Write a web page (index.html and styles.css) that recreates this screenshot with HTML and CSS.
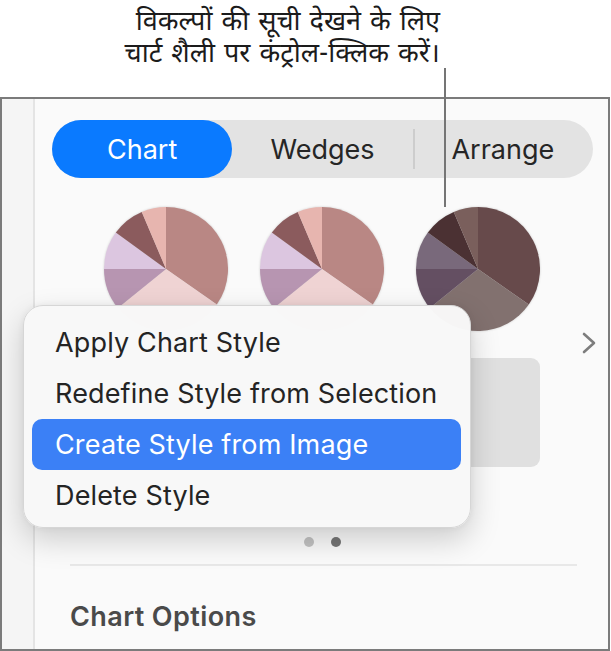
FILE: index.html
```html
<!DOCTYPE html>
<html lang="hi">
<head>
<meta charset="utf-8">
<title>Chart style menu</title>
<link rel="stylesheet" href="styles.css">
</head>
<body>
<div class="page">
  <div class="callout">
    <p class="callout-text"><span class="callout-line">विकल्पों की सूची देखने के लिए</span><span class="callout-line">चार्ट शैली पर कंट्रोल-क्लिक करें।</span></p>
  </div>
  <div class="panel">
    <div class="sidebar"></div>
    <div class="content">
      <div class="segmented">
        <div class="seg seg-active">Chart</div>
        <div class="seg">Wedges</div>
        <div class="seg seg-divided">Arrange</div>
      </div>
      <div class="styles">
        <div class="style-grid">
          <svg class="pie" viewBox="-62 -62 124 124">
            <path fill="#b98784" d="M0 0L0 -62A62 62 0 0 1 50.79 35.56Z"/>
            <path fill="#efd3d3" d="M0 0L50.79 35.56A62 62 0 0 1 -48.18 39.02Z"/>
            <path fill="#b795b1" d="M0 0L-48.18 39.02A62 62 0 0 1 -62 0Z"/>
            <path fill="#dcc6e0" d="M0 0L-62 0A62 62 0 0 1 -50.16 -36.44Z"/>
            <path fill="#8b5b5d" d="M0 0L-50.16 -36.44A62 62 0 0 1 -24.22 -57.07Z"/>
            <path fill="#e7b5af" d="M0 0L-24.22 -57.07A62 62 0 0 1 0 -62Z"/>
          </svg>
          <svg class="pie" viewBox="-62 -62 124 124">
            <path fill="#b98784" d="M0 0L0 -62A62 62 0 0 1 50.79 35.56Z"/>
            <path fill="#efd3d3" d="M0 0L50.79 35.56A62 62 0 0 1 -48.18 39.02Z"/>
            <path fill="#b795b1" d="M0 0L-48.18 39.02A62 62 0 0 1 -62 0Z"/>
            <path fill="#dcc6e0" d="M0 0L-62 0A62 62 0 0 1 -50.16 -36.44Z"/>
            <path fill="#8b5b5d" d="M0 0L-50.16 -36.44A62 62 0 0 1 -24.22 -57.07Z"/>
            <path fill="#e7b5af" d="M0 0L-24.22 -57.07A62 62 0 0 1 0 -62Z"/>
          </svg>
          <svg class="pie" viewBox="-62 -62 124 124">
            <path fill="#674a4b" d="M0 0L0 -62A62 62 0 0 1 50.79 35.56Z"/>
            <path fill="#82716f" d="M0 0L50.79 35.56A62 62 0 0 1 -48.18 39.02Z"/>
            <path fill="#644f62" d="M0 0L-48.18 39.02A62 62 0 0 1 -62 0Z"/>
            <path fill="#79697b" d="M0 0L-62 0A62 62 0 0 1 -50.16 -36.44Z"/>
            <path fill="#4b3133" d="M0 0L-50.16 -36.44A62 62 0 0 1 -24.22 -57.07Z"/>
            <path fill="#7a5f5c" d="M0 0L-24.22 -57.07A62 62 0 0 1 0 -62Z"/>
          </svg>
          <div class="thumb"></div>
          <div class="thumb"></div>
          <div class="thumb"></div>
        </div>
        <svg class="chevron" viewBox="0 0 14 22"><polyline points="2,2 12,11 2,20" fill="none" stroke="#7d7d7d" stroke-width="2.6" stroke-linecap="round" stroke-linejoin="round"/></svg>
      </div>
      <div class="dots"><span class="dot"></span><span class="dot dot-on"></span></div>
      <div class="sep"></div>
      <h2 class="options-title">Chart Options</h2>
    </div>
  </div>
  <div class="leader"></div>
  <div class="menu">
    <div class="menu-item">Apply Chart Style</div>
    <div class="menu-item">Redefine Style from Selection</div>
    <div class="menu-item menu-item-active">Create Style from Image</div>
    <div class="menu-item">Delete Style</div>
  </div>
</div>
</body>
</html>
```
FILE: styles.css
```css
html, body {
  margin: 0;
  padding: 0;
  background: #ffffff;
}
.page {
  position: relative;
  width: 611px;
  height: 651px;
  overflow: hidden;
  font-family: Inter, "Noto Sans", "Liberation Sans", sans-serif;
}
.callout {
  height: 97px;
  display: flex;
  justify-content: flex-end;
  padding-right: 171px;
  box-sizing: border-box;
}
.callout-text {
  margin: 0;
  padding-top: 8px;
  display: flex;
  flex-direction: column;
  align-items: flex-end;
  gap: 0;
  font-family: "Noto Sans Devanagari", "Lohit Devanagari", "Noto Sans", "DejaVu Sans", sans-serif;
  font-size: 27px;
  line-height: 32px;
  word-spacing: 2px;
  color: #1b1b1b;
}
.callout-line {
  display: block;
  white-space: nowrap;
}
.panel {
  width: 610px;
  height: 554px;
  box-sizing: border-box;
  border: 2px solid #7b7b7b;
  display: grid;
  grid-template-columns: 33px 1fr;
  background: #fafafa;
}
.sidebar {
  background: #f5f5f5;
  border-right: 2px solid #e4e4e4;
}
.content {
  display: flex;
  flex-direction: column;
  padding: 21px 15px 0 17px;
}
.segmented {
  height: 58px;
  border-radius: 29px;
  background: #e3e3e3;
  display: grid;
  grid-template-columns: 1fr 1fr 1fr;
}
.seg {
  position: relative;
  display: flex;
  align-items: center;
  justify-content: center;
  font-size: 27px;
  color: #262626;
  border-radius: 29px;
}
.seg-active {
  background: #0a7aff;
  color: #ffffff;
}
.seg-divided::before {
  content: "";
  position: absolute;
  left: 0;
  top: 9px;
  bottom: 9px;
  width: 2px;
  background: #cdcdcd;
}
.styles {
  position: relative;
  margin-top: 29px;
  padding-left: 52px;
}
.style-grid {
  display: grid;
  grid-template-columns: repeat(3, 124px);
  grid-template-rows: 124px 109px;
  column-gap: 32px;
  row-gap: 27px;
}
.pie {
  width: 124px;
  height: 124px;
  display: block;
  filter: drop-shadow(0 0 1px rgba(0,0,0,0.18));
}
.thumb {
  background: #e0e0e0;
  border-radius: 9px;
}
.chevron {
  position: absolute;
  right: -3px;
  top: 125px;
  width: 14px;
  height: 22px;
}
.dots {
  display: flex;
  justify-content: center;
  gap: 17px;
  margin-top: 70px;
  height: 10px;
}
.dot {
  width: 10px;
  height: 10px;
  border-radius: 50%;
  background: #c2c2c2;
}
.dot-on {
  background: #757575;
}
.sep {
  height: 2px;
  background: #e8e8e8;
  margin: 17px 16px 0 18px;
}
.options-title {
  margin: 35px 0 0 18px;
  font-size: 27px;
  line-height: 32px;
  font-weight: 600;
  letter-spacing: 0.4px;
  color: #4a4a4a;
}
.leader {
  position: absolute;
  left: 444px;
  top: 68px;
  width: 2px;
  height: 139px;
  background: #757575;
}
.menu {
  position: absolute;
  left: 23px;
  top: 305px;
  width: 448px;
  height: 223px;
  box-sizing: border-box;
  padding: 11px 9px 8px 8px;
  border-radius: 20px;
  background: rgba(248, 248, 248, 0.98);
  border: 1px solid #d6d6d6;
  box-shadow: 0 12px 30px rgba(0, 0, 0, 0.18), 0 0 6px rgba(0, 0, 0, 0.06);
}
.menu-item {
  height: 51px;
  line-height: 51px;
  padding-left: 23px;
  border-radius: 10px;
  font-size: 27px;
  letter-spacing: 0.15px;
  color: #242424;
  white-space: nowrap;
}
.menu-item-active {
  background: #3b80f6;
  color: #ffffff;
}
```
